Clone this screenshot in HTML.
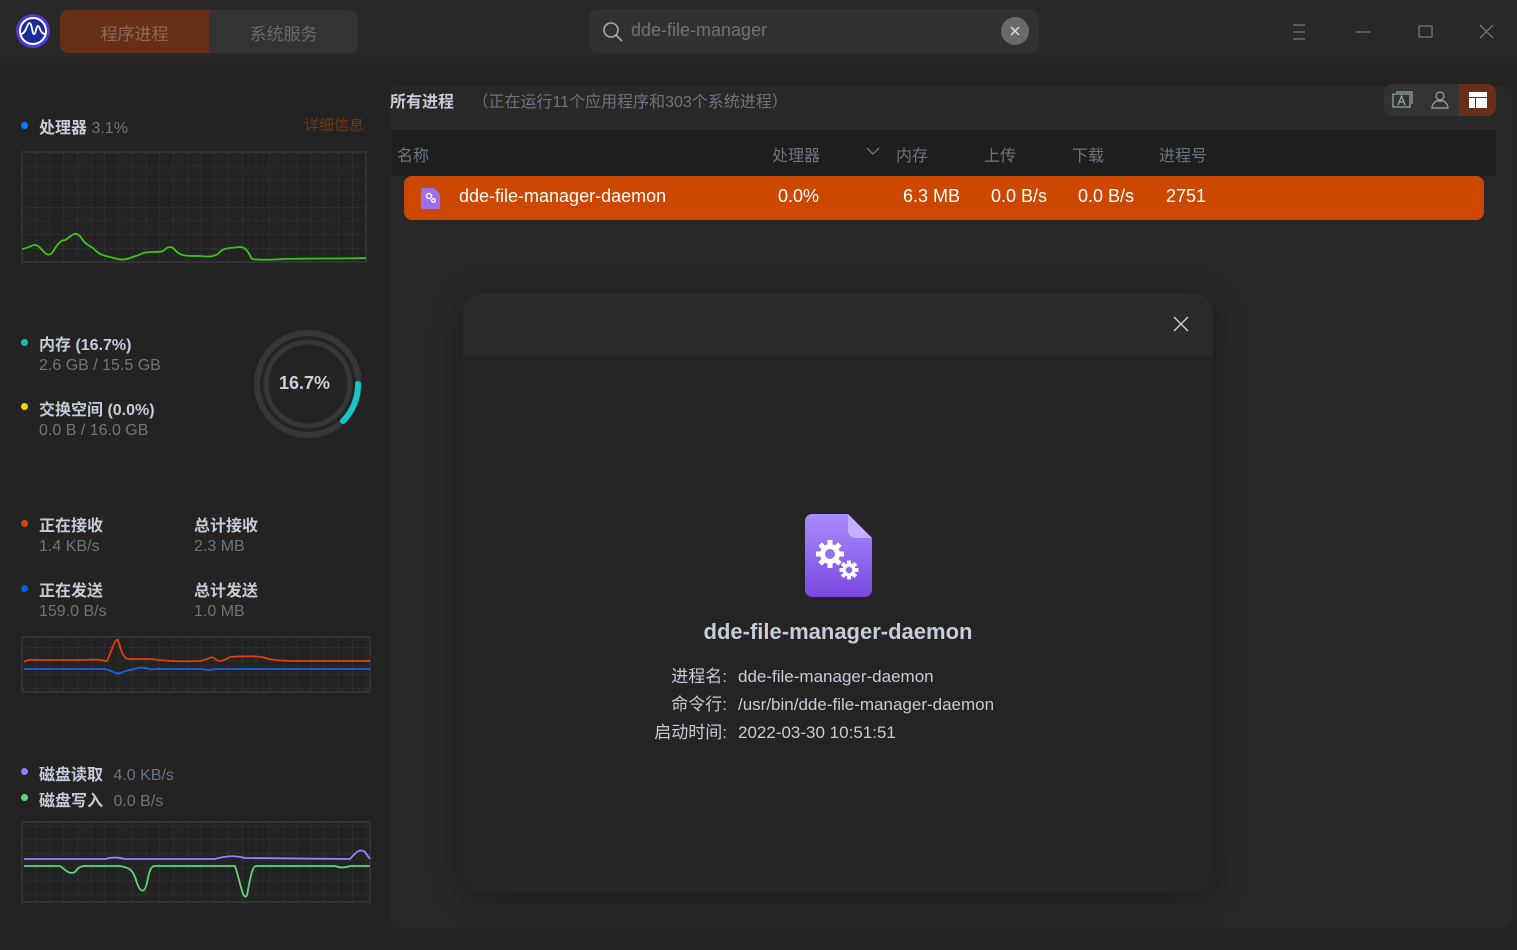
<!DOCTYPE html><html><head><meta charset="utf-8"><style>
*{margin:0;padding:0;box-sizing:border-box}
body{width:1517px;height:950px;background:#232323;font-family:"Liberation Sans","Noto Sans CJK SC",sans-serif;color:#c0c6d4;position:relative;overflow:hidden}
.a{position:absolute;white-space:nowrap}
.dot{position:absolute;width:7px;height:7px;border-radius:50%}
.lbl{font-size:16px;color:#c6ccd8;font-weight:bold}
.val{font-size:16px;color:#6d7580}
.hd{font-size:16px;color:#6d7580}
.row{font-size:18px;color:#fff}
</style></head><body>
<div class="a" style="left:0;top:0;width:1517px;height:63px;background:#282828"></div>
<svg class="a" style="left:15px;top:13px" width="36" height="36" viewBox="0 0 36 36"><circle cx="18" cy="18" r="17" fill="#4a3bd8"/><circle cx="18" cy="18" r="13" fill="#1a2a9a" stroke="#fff" stroke-width="2"/><path d="M6 21 C11 21 12 10 14.5 10 C17 10 17 21 19 21 C21 21 21 13 23 13 C25 13 25 21 30 21" stroke="#fff" stroke-width="1.8" fill="none"/></svg>
<div class="a" style="left:60px;top:10px;width:298px;height:43px;border-radius:9px;background:#333;overflow:hidden"><div style="width:149px;height:43px;background:#682f17"></div></div>
<div class="a" style="left:60px;top:20px;width:149px;text-align:center;font-size:17px;color:#8a6a5a">程序进程</div>
<div class="a" style="left:209px;top:20px;width:149px;text-align:center;font-size:17px;color:#6a6a6a">系统服务</div>
<div class="a" style="left:589px;top:9px;width:450px;height:44px;border-radius:9px;background:#313131"></div>
<svg class="a" style="left:602px;top:21px" width="22" height="22"><circle cx="9" cy="9" r="7" stroke="#aaa" stroke-width="1.6" fill="none"/><line x1="14" y1="14" x2="20" y2="20" stroke="#aaa" stroke-width="1.6"/></svg>
<div class="a" style="left:631px;top:20px;font-size:18px;color:#6f737a">dde-file-manager</div>
<div class="a" style="left:1001px;top:17px;width:28px;height:28px;border-radius:50%;background:#6a6a6a"></div>
<svg class="a" style="left:1001px;top:17px" width="28" height="28"><path d="M10 10L18 18M18 10L10 18" stroke="#ddd" stroke-width="1.5"/></svg>
<svg class="a" style="left:1280px;top:15px" width="230" height="35" stroke="#777" stroke-width="1.3" fill="none"><path d="M13 10h12M13 17h12M13 24h12"/><path d="M76 17h14"/><rect x="139" y="11" width="13" height="11"/><path d="M200 10l13 13M213 10l-13 13"/></svg>
<div class="dot" style="left:21px;top:122px;background:#0a7cff"></div>
<div class="a lbl" style="left:39px;top:114px">处理器 <span style="color:#6d7580;font-weight:normal">3.1%</span></div>
<div class="a" style="left:304px;top:114px;font-size:15px;color:#6e3618">详细信息</div>
<svg class="a" style="left:0;top:0" width="390" height="950">
<defs><pattern id="g" width="13.75" height="13.75" patternUnits="userSpaceOnUse" x="22" y="152"><path d="M0 0V13.75M0 0H13.75" stroke="#3e4046" stroke-width="1" stroke-dasharray="3 2" fill="none"/></pattern></defs>
<rect x="22" y="152" width="344" height="110" fill="url(#g)" stroke="#3e4046"/>
<path d="M22 249 C30 248 33 243 38 246 C43 250 47 258 52 253 C57 245 60 240 65 240 C70 238 74 230 80 236 C85 244 88 245 93 248 C98 253 100 255 110 257 C118 259 123 261 130 258 C135 256 138 256 143 253 C150 251 158 253 163 251 C168 246 172 246 175 250 C180 256 185 256 200 256 C210 257 212 257 218 254 C222 248 228 248 240 247 C246 247 248 252 252 259 C260 260 270 260 283 259 C300 258 340 259 366 258" stroke="#3fc218" stroke-width="1.8" fill="none"/>
<rect x="22" y="637" width="348" height="55" fill="url(#g)" stroke="#3e4046"/>
<path d="M24 662 C28 659 30 660 40 660 L85 660 C95 659 100 660 107 661 C112 650 115 638 118 640 C121 650 123 658 128 659 L150 659 C160 660 170 662 200 661 C208 660 210 656 214 658 C218 662 222 662 230 657 C245 656 255 656 262 657 C270 660 280 661 300 661 L370 661" stroke="#e0410a" stroke-width="1.8" fill="none"/>
<path d="M24 669 L105 669 C112 670 115 675 120 673 C125 671 130 670 138 668 C145 666 150 671 155 669 L200 669 C205 669 208 671 215 669 L370 669" stroke="#1860e8" stroke-width="1.8" fill="none"/>
<rect x="22" y="822" width="348" height="80" fill="url(#g)" stroke="#3e4046"/>
<path d="M24 859 L105 859 C112 857 118 857 125 859 L215 859 C225 856 235 855 245 858 L350 859 C356 852 360 848 365 852 L370 859" stroke="#9384ff" stroke-width="1.8" fill="none"/>
<path d="M24 866 L60 866 C65 870 70 875 75 872 C78 868 80 866 85 866 L120 866 C130 868 133 870 136 880 C140 893 145 896 148 878 C150 868 152 866 155 866 L235 866 C240 880 243 903 247 895 C250 880 252 866 256 866 L335 866 C340 868 345 868 350 866 L370 866" stroke="#5fd678" stroke-width="1.8" fill="none"/>
<circle cx="308" cy="384" r="51" stroke="#363636" stroke-width="6" fill="none"/>
<circle cx="308" cy="384" r="42" stroke="#363636" stroke-width="5" fill="none"/>
<path d="M358 384 A51 51 0 0 1 343 421" stroke="#16c6c6" stroke-width="6" stroke-linecap="round" fill="none"/>
</svg>
<div class="a" style="left:279px;top:373px;font-size:18px;font-weight:bold;color:#c8d0de">16.7%</div>
<div class="dot" style="left:21px;top:339px;background:#10c0b8"></div>
<div class="a lbl" style="left:39px;top:331px">内存 (16.7%)</div>
<div class="a val" style="left:39px;top:357px">2.6 GB / 15.5 GB</div>
<div class="dot" style="left:21px;top:403px;background:#f3d600"></div>
<div class="a lbl" style="left:39px;top:396px">交换空间 (0.0%)</div>
<div class="a val" style="left:39px;top:422px">0.0 B / 16.0 GB</div>
<div class="dot" style="left:21px;top:520px;background:#e0410a"></div>
<div class="a lbl" style="left:39px;top:512px">正在接收</div>
<div class="a val" style="left:39px;top:538px">1.4 KB/s</div>
<div class="a lbl" style="left:194px;top:512px">总计接收</div>
<div class="a val" style="left:194px;top:538px">2.3 MB</div>
<div class="dot" style="left:21px;top:585px;background:#0a5cf0"></div>
<div class="a lbl" style="left:39px;top:577px">正在发送</div>
<div class="a val" style="left:39px;top:603px">159.0 B/s</div>
<div class="a lbl" style="left:194px;top:577px">总计发送</div>
<div class="a val" style="left:194px;top:603px">1.0 MB</div>
<div class="dot" style="left:21px;top:768px;background:#8c82ff"></div>
<div class="a lbl" style="left:39px;top:761px">磁盘读取 <span style="color:#6d7580;font-weight:normal;margin-left:6px">4.0 KB/s</span></div>
<div class="dot" style="left:21px;top:794px;background:#5fd678"></div>
<div class="a lbl" style="left:39px;top:787px">磁盘写入 <span style="color:#6d7580;font-weight:normal;margin-left:6px">0.0 B/s</span></div>
<div class="a" style="left:390px;top:86px;width:1122px;height:842px;background:#282828;border-radius:8px"></div>
<div class="a" style="left:390px;top:88px;font-size:16px;font-weight:bold;color:#c6ccd8">所有进程 <span style="font-weight:normal;color:#6d7580;margin-left:14px">（正在运行11个应用程序和303个系统进程）</span></div>
<div class="a" style="left:1384px;top:84px;width:112px;height:32px;border-radius:9px;background:#333;overflow:hidden"><div style="position:absolute;left:75px;width:37px;height:32px;background:#682f17"></div></div>
<svg class="a" style="left:1384px;top:84px" width="112" height="32" fill="none" stroke="#9aa" stroke-width="1.2"><rect x="9" y="10" width="17" height="13"/><path d="M12 8h16v12"/><path d="M14 21l3.5-9 3.5 9M15.5 18h4"/><circle cx="56" cy="12" r="4"/><path d="M48 24c0-5 4-6 4-7h8c0 1 4 2 4 7z"/><rect x="85" y="8" width="18" height="5" fill="#fff" stroke="none"/><rect x="85" y="14" width="6" height="10" fill="#fff" stroke="none"/><rect x="92" y="14" width="11" height="10" fill="#fff" stroke="none"/></svg>
<div class="a" style="left:391px;top:130px;width:1105px;height:46px;background:#1e1e1e"></div>
<div class="a hd" style="left:397px;top:142px">名称</div>
<div class="a hd" style="left:772px;top:142px">处理器</div>
<svg class="a" style="left:865px;top:145px" width="16" height="12"><path d="M2 3l6 6 6-6" stroke="#777" fill="none" stroke-width="1.3"/></svg>
<div class="a hd" style="left:896px;top:142px">内存</div>
<div class="a hd" style="left:984px;top:142px">上传</div>
<div class="a hd" style="left:1072px;top:142px">下载</div>
<div class="a hd" style="left:1159px;top:142px">进程号</div>
<div class="a" style="left:404px;top:176px;width:1080px;height:44px;background:#cc4800;border-radius:8px"></div>
<svg class="a" style="left:420px;top:186px" width="22" height="24"><path d="M3 2h11l6 6v13a2 2 0 0 1-2 2H3a2 2 0 0 1-2-2V4a2 2 0 0 1 2-2z" fill="#9a70f0"/><circle cx="9" cy="10" r="2.5" stroke="#fff" stroke-width="1.5" fill="none"/><circle cx="13.5" cy="14.5" r="1.8" stroke="#fff" stroke-width="1.3" fill="none"/></svg>
<div class="a row" style="left:459px;top:186px">dde-file-manager-daemon</div>
<div class="a row" style="left:778px;top:186px">0.0%</div>
<div class="a row" style="left:903px;top:186px">6.3 MB</div>
<div class="a row" style="left:991px;top:186px">0.0 B/s</div>
<div class="a row" style="left:1078px;top:186px">0.0 B/s</div>
<div class="a row" style="left:1166px;top:186px">2751</div>
<div class="a" style="left:463px;top:293px;width:750px;height:600px;background:#242424;border-radius:20px;overflow:hidden;box-shadow:0 6px 30px rgba(0,0,0,.35)"><div style="height:63px;background:#2a2a2a"></div></div>
<svg class="a" style="left:1172px;top:315px" width="18" height="18"><path d="M2 2l14 14M16 2L2 16" stroke="#ccc" stroke-width="1.5"/></svg>
<svg class="a" style="left:798px;top:508px" width="82" height="96"><defs><linearGradient id="p" x1="0" y1="0" x2="0" y2="1"><stop offset="0" stop-color="#a98cff"/><stop offset="1" stop-color="#7a48e0"/></linearGradient></defs><path d="M14 6h36l24 24v52a7 7 0 0 1-7 7H14a7 7 0 0 1-7-7V13a7 7 0 0 1 7-7z" fill="url(#p)"/><path d="M50 6v17a7 7 0 0 0 7 7h17z" fill="#c4b0ff"/>
<g fill="#fff"><circle cx="32" cy="46" r="10"/><g transform="translate(32 46)"><rect x="-2.5" y="-14" width="5" height="28"/><rect x="-2.5" y="-14" width="5" height="28" transform="rotate(45)"/><rect x="-2.5" y="-14" width="5" height="28" transform="rotate(90)"/><rect x="-2.5" y="-14" width="5" height="28" transform="rotate(135)"/></g>
<circle cx="51" cy="62" r="6.5"/><g transform="translate(51 62)"><rect x="-2" y="-9.5" width="4" height="19"/><rect x="-2" y="-9.5" width="4" height="19" transform="rotate(45)"/><rect x="-2" y="-9.5" width="4" height="19" transform="rotate(90)"/><rect x="-2" y="-9.5" width="4" height="19" transform="rotate(135)"/></g></g>
<circle cx="32" cy="46" r="5" fill="#9274f2"/><circle cx="51" cy="62" r="3.2" fill="#8a66ec"/></svg>
<div class="a" style="left:463px;top:619px;width:750px;text-align:center;font-size:22px;font-weight:bold;color:#c6ccd8">dde-file-manager-daemon</div>
<div class="a" style="left:560px;top:663px;width:167px;text-align:right;font-size:17px;color:#c6ccd8;line-height:28px">进程名:<br>命令行:<br>启动时间:</div>
<div class="a" style="left:738px;top:663px;font-size:17px;color:#c6ccd8;line-height:28px">dde-file-manager-daemon<br>/usr/bin/dde-file-manager-daemon<br>2022-03-30 10:51:51</div>
</body></html>
